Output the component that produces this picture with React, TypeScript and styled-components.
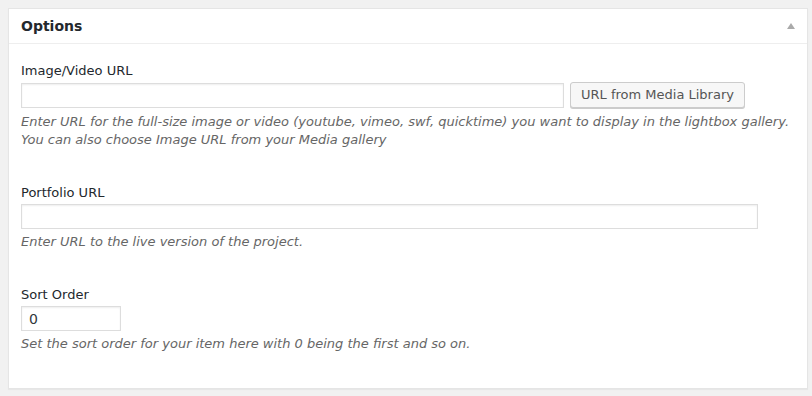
import styled, { createGlobalStyle } from "styled-components";

const GlobalStyle = createGlobalStyle`
  body {
    margin: 0;
    background: #f1f1f1;
    font-family: "DejaVu Sans", "Open Sans", sans-serif;
    font-size: 13px;
    color: #444;
  }
`;

const Page = styled.div`
  padding: 8px 4px 8px 8px;
`;

const Postbox = styled.div`
  background: #fff;
  border: 1px solid #e5e5e5;
  box-shadow: 0 1px 1px rgba(0, 0, 0, 0.04);
`;

const Header = styled.div`
  display: flex;
  align-items: center;
  justify-content: space-between;
  height: 34px;
  padding: 0 12px;
  border-bottom: 1px solid #eee;
`;

const Title = styled.h2`
  margin: 0;
  font-size: 14px;
  font-weight: bold;
  color: #23282d;
`;

const Toggle = styled.span`
  width: 0;
  height: 0;
  border-left: 4px solid transparent;
  border-right: 4px solid transparent;
  border-bottom: 6px solid #aaa;
  margin-right: 0;
`;

const Inside = styled.div`
  padding: 18px 12px 35px;
`;

const Field = styled.div`
  & + & {
    margin-top: 35px;
  }
`;

const Label = styled.label`
  display: block;
  line-height: 18px;
  margin-bottom: 2px;
  color: #23282d;
`;

const Row = styled.div`
  display: flex;
  align-items: center;
  gap: 6px;
`;

const Input = styled.input<{ $width: number }>`
  box-sizing: border-box;
  width: ${({ $width }) => $width}px;
  height: 25px;
  margin: 0;
  padding: 2px 7px;
  border: 1px solid #ddd;
  box-shadow: inset 0 1px 2px rgba(0, 0, 0, 0.07);
  background: #fff;
  font-family: inherit;
  font-size: 14px;
  color: #32373c;
  outline: none;
`;

const Button = styled.button`
  box-sizing: border-box;
  height: 26px;
  margin: 0;
  padding: 0 10px 1px;
  border: 1px solid #ccc;
  border-radius: 3px;
  background: #f7f7f7;
  box-shadow: 0 1px 0 #ccc;
  font-family: inherit;
  font-size: 13px;
  color: #555;
  cursor: pointer;
`;

const Description = styled.p<{ $gap?: number }>`
  margin: ${({ $gap }) => $gap ?? 4}px 0 0;
  line-height: 18px;
  font-style: italic;
  color: #666;
`;

export default function App() {
  return (
    <>
      <GlobalStyle />
      <Page>
        <Postbox>
          <Header>
            <Title>Options</Title>
            <Toggle />
          </Header>
          <Inside>
            <Field>
              <Label>Image/Video URL</Label>
              <Row>
                <Input $width={543} />
                <Button>URL from Media Library</Button>
              </Row>
              <Description $gap={5}>
                Enter URL for the full-size image or video (youtube, vimeo, swf, quicktime) you want to display in the lightbox gallery.
                <br />
                You can also choose Image URL from your Media gallery
              </Description>
            </Field>
            <Field>
              <Label>Portfolio URL</Label>
              <Input $width={737} />
              <Description>Enter URL to the live version of the project.</Description>
            </Field>
            <Field>
              <Label>Sort Order</Label>
              <Input $width={100} defaultValue="0" />
              <Description>Set the sort order for your item here with 0 being the first and so on.</Description>
            </Field>
          </Inside>
        </Postbox>
      </Page>
    </>
  );
}
